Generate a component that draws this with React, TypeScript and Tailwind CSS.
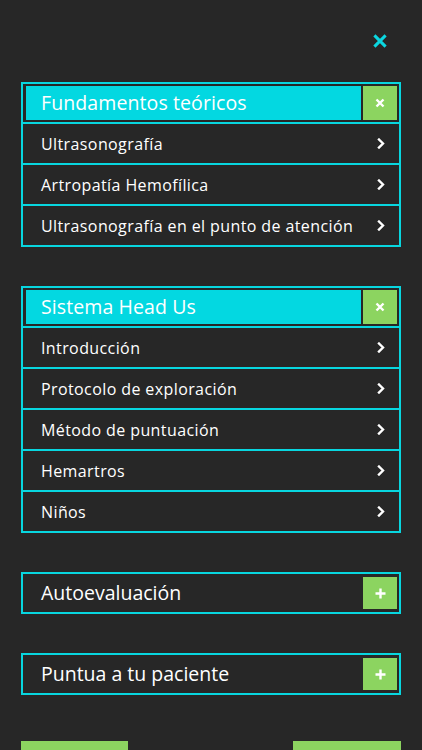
const font = { fontFamily: "'Open Sans', Lato, sans-serif" };

function Chevron() {
  return (
    <svg width="8" height="11" viewBox="0 0 8 11" className="mr-[14px]">
      <path d="M2 1.5 L6 5.5 L2 9.5" fill="none" stroke="white" strokeWidth="2.4" strokeLinecap="square" />
    </svg>
  );
}

function Cross({ size, stroke, color }: { size: number; stroke: number; color: string }) {
  return (
    <svg width={size} height={size} viewBox="0 0 10 10">
      <path d="M1.5 1.5 L8.5 8.5 M8.5 1.5 L1.5 8.5" stroke={color} strokeWidth={stroke} strokeLinecap="butt" fill="none" />
    </svg>
  );
}

function Plus() {
  return (
    <svg width="11" height="11" viewBox="0 0 11 11">
      <path d="M5.5 0.5 V10.5 M0.5 5.5 H10.5" stroke="white" strokeWidth="2.4" fill="none" />
    </svg>
  );
}

function OpenSection({ title, items }: { title: string; items: string[] }) {
  return (
    <div className="border-2 border-[#08d6df]">
      <div className="flex h-[38px] gap-[2px] p-[2px] pl-[3px]">
        <div className="flex flex-1 items-center bg-[#03d8e1] pl-[15px] text-[19.5px] tracking-[0.1px] text-white">{title}</div>
        <div className="flex w-[34px] items-center justify-center bg-[#8cd460]">
          <Cross size={10} stroke={2.4} color="white" />
        </div>
      </div>
      {items.map((item) => (
        <div key={item} className="flex h-[41px] items-center justify-between border-t-2 border-[#08d6df] pl-[18px] text-[16px] tracking-[0.4px] text-white">
          <span>{item}</span>
          <Chevron />
        </div>
      ))}
    </div>
  );
}

function ClosedSection({ title }: { title: string }) {
  return (
    <div className="flex h-[42px] items-center justify-between border-2 border-[#08d6df] pr-[2px] pl-[18px]">
      <span className="text-[19.5px] text-white">{title}</span>
      <div className="flex h-[32px] w-[34px] items-center justify-center bg-[#8cd460]">
        <Plus />
      </div>
    </div>
  );
}

export default function App() {
  return (
    <main className="h-[750px] w-[422px] overflow-hidden bg-[#272727] px-[21px]" style={font}>
      <div className="flex h-[82px] justify-end pt-[33px] pr-[13px]">
        <div className="h-[16px]">
          <Cross size={16} stroke={1.9} color="#0bd7e0" />
        </div>
      </div>
      <div className="flex flex-col gap-[39px]">
        <OpenSection
          title="Fundamentos teóricos"
          items={["Ultrasonografía", "Artropatía Hemofílica", "Ultrasonografía en el punto de atención"]}
        />
        <OpenSection
          title="Sistema Head Us"
          items={["Introducción", "Protocolo de exploración", "Método de puntuación", "Hemartros", "Niños"]}
        />
        <ClosedSection title="Autoevaluación" />
        <ClosedSection title="Puntua a tu paciente" />
      </div>
      <div className="mt-[46px] flex justify-between">
        <div className="h-[40px] w-[107px] bg-[#8cd460]" />
        <div className="h-[40px] w-[108px] bg-[#8cd460]" />
      </div>
    </main>
  );
}
